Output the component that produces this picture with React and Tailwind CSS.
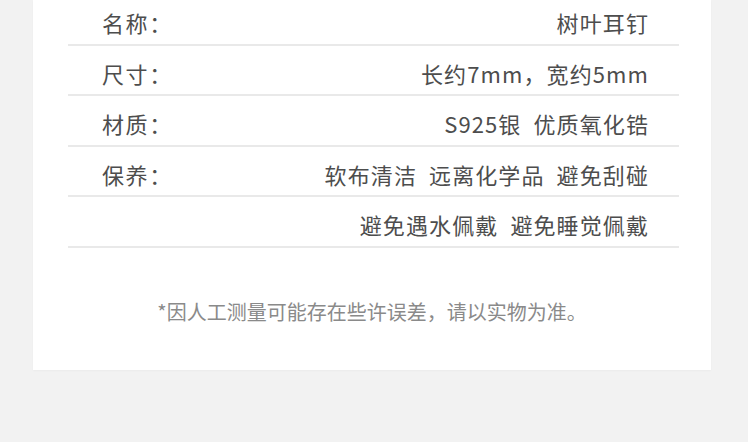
import React from 'react';

const rows = [
  { label: '名称：', value: '树叶耳钉' },
  { label: '尺寸：', value: '长约7mm，宽约5mm' },
  { label: '材质：', value: 'S925银  优质氧化锆' },
  { label: '保养：', value: '软布清洁  远离化学品  避免刮碰' },
  { label: '', value: '避免遇水佩戴  避免睡觉佩戴' },
];

const font = { fontFamily: '"Noto Sans CJK SC", "Noto Sans", sans-serif' };

const App = () => {
  return (
    <div className="w-[748px] h-[442px] bg-[#f2f2f2] overflow-hidden" style={font}>
      <div className="ml-[33px] w-[678px] bg-white pl-[35px] pr-[32px] pb-[44px] shadow-[0_1px_2px_rgba(0,0,0,0.03)]">
        {rows.map((r, i) => (
          <div
            key={i}
            className={`flex items-center justify-between border-b-2 border-[#e9e9e9] pl-[34px] pr-[30px] pb-[7.5px] ${i === 0 ? 'pt-[8px]' : 'pt-[13px]'}`}
          >
            <span className="text-[22px] leading-[28px] tracking-[1.6px] text-[#4d4d4d]">{r.label}</span>
            <span className="text-[22px] leading-[28px] tracking-[1.1px] text-[#4d4d4d] whitespace-pre">{r.value}</span>
          </div>
        ))}
        <p className="mt-[50px] text-center text-[20px] leading-[28px] text-[#8a8a8a] pr-[3px]">
          *因人工测量可能存在些许误差，请以实物为准。
        </p>
      </div>
    </div>
  );
};

export default App;
